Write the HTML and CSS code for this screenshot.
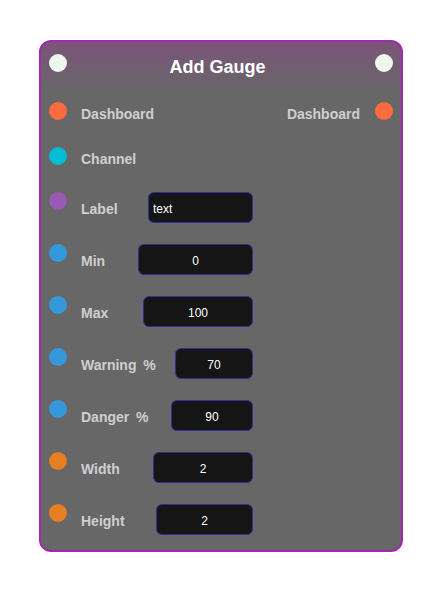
FILE: index.html
```html
<!DOCTYPE html>
<html>
<head>
<meta charset="utf-8">
<link rel="stylesheet" href="styles.css">
</head>
<body>
<div class="node">
  <div class="header">
    <span class="dot dot-white"></span>
    <div class="title">Add Gauge</div>
    <span class="dot dot-white"></span>
  </div>
  <div class="row">
    <span class="dot dot-red"></span>
    <span class="label">Dashboard</span>
    <span class="out">
      <span class="label">Dashboard</span>
      <span class="dot dot-red"></span>
    </span>
  </div>
  <div class="row">
    <span class="dot dot-cyan"></span>
    <span class="label">Channel</span>
  </div>
  <div class="row">
    <span class="dot dot-purple"></span>
    <div class="field">
      <span class="label label-in">Label</span>
      <input class="inp inp-text w-105" type="text" value="text">
    </div>
  </div>
  <div class="row">
    <span class="dot dot-blue"></span>
    <div class="field">
      <span class="label label-in">Min</span>
      <input class="inp w-115" type="text" value="0">
    </div>
  </div>
  <div class="row">
    <span class="dot dot-blue"></span>
    <div class="field">
      <span class="label label-in">Max</span>
      <input class="inp w-110" type="text" value="100">
    </div>
  </div>
  <div class="row">
    <span class="dot dot-blue"></span>
    <div class="field">
      <span class="label label-in label-pct">Warning %</span>
      <input class="inp w-78" type="text" value="70">
    </div>
  </div>
  <div class="row">
    <span class="dot dot-blue"></span>
    <div class="field">
      <span class="label label-in label-pct">Danger %</span>
      <input class="inp w-82" type="text" value="90">
    </div>
  </div>
  <div class="row">
    <span class="dot dot-orange"></span>
    <div class="field">
      <span class="label label-in">Width</span>
      <input class="inp w-100" type="text" value="2">
    </div>
  </div>
  <div class="row">
    <span class="dot dot-orange"></span>
    <div class="field">
      <span class="label label-in">Height</span>
      <input class="inp w-97" type="text" value="2">
    </div>
  </div>
</div>
</body>
</html>
```
FILE: styles.css
```css
html, body {
  margin: 0;
  padding: 0;
  background: #ffffff;
}
body {
  padding: 40px 0 0 39px;
  font-family: "Liberation Sans", Arial, sans-serif;
}
.node {
  box-sizing: border-box;
  width: 364px;
  height: 512px;
  border: 2px solid #a32ab0;
  border-radius: 12px;
  background: linear-gradient(to bottom, #7b5479 0px, #676767 52px, #676767 100%);
  padding: 12px 8px 15px 8px;
  display: flex;
  flex-direction: column;
  gap: 21px;
}
.header {
  display: flex;
  align-items: flex-start;
  height: 27px;
}
.title {
  flex: 1;
  text-align: center;
  color: #ffffff;
  font-weight: bold;
  font-size: 18px;
  line-height: 27px;
  padding-right: 7px;
}
.dot {
  flex: none;
  width: 18px;
  height: 18px;
  border-radius: 50%;
}
.dot-white { background: #eef7ee; }
.dot-red { background: #ff6b3e; }
.dot-cyan { background: #00bcd4; }
.dot-purple { background: #9b59b6; }
.dot-blue { background: #3498db; }
.dot-orange { background: #e67e22; }
.row {
  display: flex;
  align-items: flex-start;
}
.label {
  color: #cfcfcf;
  font-weight: bold;
  font-size: 14px;
  line-height: 24px;
  margin-left: 14px;
  white-space: nowrap;
}
.out {
  margin-left: auto;
  display: flex;
  align-items: flex-start;
}
.out .label {
  margin-left: 0;
  margin-right: 15px;
}
.field {
  display: flex;
  align-items: flex-start;
  width: 186px;
  height: 31px;
}
.label-in {
  line-height: 28px;
  padding-top: 3px;
}
.label-pct {
  word-spacing: 3px;
}
.inp {
  box-sizing: border-box;
  margin: 0 0 0 auto;
  height: 31px;
  background: #151515;
  border: 1px solid #2e2e96;
  border-radius: 6px;
  color: #ffffff;
  font-family: "Liberation Sans", Arial, sans-serif;
  font-size: 12px;
  text-align: center;
  padding: 2px 4px 0 4px;
  outline: none;
}
.inp-text {
  text-align: left;
}
.w-105 { width: 105px; }
.w-115 { width: 115px; }
.w-110 { width: 110px; }
.w-78 { width: 78px; }
.w-82 { width: 82px; }
.w-100 { width: 100px; }
.w-97 { width: 97px; }
```
